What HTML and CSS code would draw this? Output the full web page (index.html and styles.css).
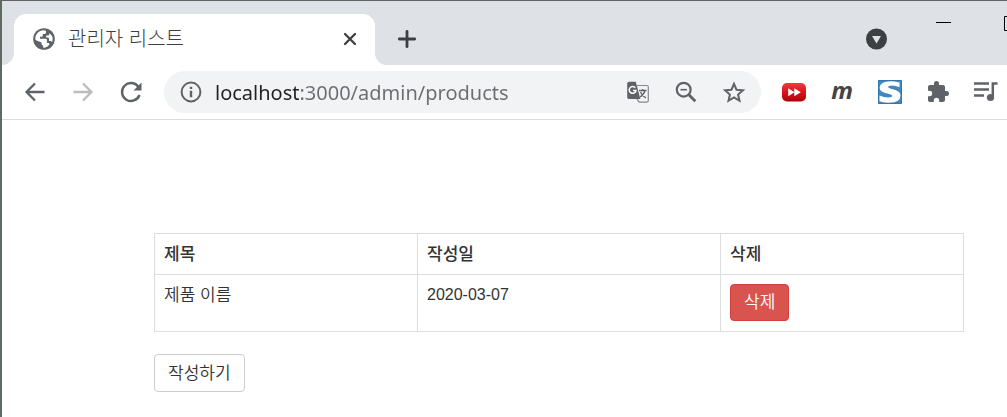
FILE: index.html
```html
<!DOCTYPE html>
<html lang="ko">
<head>
<meta charset="utf-8">
<title>관리자 리스트</title>
<link rel="stylesheet" href="styles.css">
</head>
<body>
<div class="window">
  <header class="tab-strip">
    <div class="strip-edge"></div>
    <div class="tab">
      <svg class="icon" viewBox="0 0 24 24" aria-hidden="true"><circle cx="12" cy="12" r="10.800" fill="#5f6368"/><path fill="#fff" d="M3.300 11.500C3.500 7 7 3.700 11.300 3.300L14 3.800V5.500q0 1.500-1.600 1.500h-1.600v1.500q0 1.300-1.400 1.300H8v2h5.600q1.300 0 1.300 1.300v3h1.200q1.200 0 1.500 1.200-1.500 2.300-4.200 3.200l-2.200.3v-2q-1.700-.3-1.700-2v-1.200L3.500 13ZM20.300 9.500l.4 2.500-.5 3-1.200-1h-2v-2.200q0-1.200-1.300-1.300h-1.500V8.600h1.700q1.300 0 1.300-1.300V6.200q2.200 1.200 3.100 3.300Z"/></svg>
      <span class="tab-title">관리자 리스트</span>
      <button class="icon-button" type="button" aria-label="탭 닫기"><svg class="icon" viewBox="0 0 24 24"><path d="M7 7l10 10M17 7L7 17" stroke="#3c4043" stroke-width="2.300" stroke-linecap="round"/></svg></button>
    </div>
    <div class="strip-rest">
      <button class="icon-button" type="button" aria-label="새 탭"><svg class="icon" viewBox="0 0 24 24"><path d="M12 4.300v15.400M4.300 12h15.400" stroke="#3c4043" stroke-width="2.800" stroke-linecap="round"/></svg></button>
      <button class="icon-button tab-search" type="button" aria-label="탭 검색"><svg class="icon" viewBox="0 0 24 24"><circle cx="12.500" cy="12" r="10.500" fill="#3c4043"/><path d="M8 9h9l-4.500 7.500z" fill="#dee1e6"/></svg></button>
      <div class="window-controls">
        <button class="icon-button" type="button" aria-label="최소화"><svg class="control" viewBox="0 0 16 16"><path d="M0 6.500h15" stroke="#000"/></svg></button>
        <button class="icon-button" type="button" aria-label="최대화"><svg class="control" viewBox="0 0 16 16"><path d="M.5.5h14v14H.5z" fill="none" stroke="#000"/></svg></button>
      </div>
    </div>
  </header>
  <nav class="toolbar" aria-label="탐색">
    <button class="icon-button" type="button" aria-label="뒤로"><svg class="icon" viewBox="0 0 24 24"><path d="M21.500 12H4M12 3.500L3.500 12l8.500 8.500" fill="none" stroke="#5f6368" stroke-width="2.300"/></svg></button>
    <button class="icon-button" type="button" aria-label="앞으로"><svg class="icon" viewBox="0 0 24 24"><path d="M2.500 12H20M12 3.500l8.500 8.500-8.500 8.500" fill="none" stroke="#babcbe" stroke-width="2.300"/></svg></button>
    <button class="icon-button" type="button" aria-label="새로고침"><svg class="icon" viewBox="0 0 24 24"><path d="M19.500 7A9 9 0 1 0 20.500 15" fill="none" stroke="#5f6368" stroke-width="2.400"/><path d="M22.500 2.500v8h-8z" fill="#5f6368"/></svg></button>
    <div class="address-bar">
      <button class="icon-button" type="button" aria-label="사이트 정보"><svg class="icon" viewBox="0 0 24 24"><circle cx="12" cy="12" r="9.400" fill="none" stroke="#5f6368" stroke-width="2"/><path d="M12 10.800v6.400M12 6.700v2.400" stroke="#5f6368" stroke-width="2.400"/></svg></button>
      <input class="address" type="text" value="localhost:3000/admin/products" aria-label="주소" spellcheck="false">
      <button class="icon-button" type="button" aria-label="번역"><svg class="icon" viewBox="0 0 24 24"><path d="M11 5.500h9.900q1.400 0 1.400 1.600v13.300q0 1.800-1.600 1.800H13.200l-2.200-3" fill="none" stroke="#85888b" stroke-width="1.200"/><path d="M3 1.700h6.800l4.500 17.300H3q-1.800 0-1.800-1.800V3.500Q1.200 1.700 3 1.700Z" fill="#5f6368"/><path d="M9.300 7.800A3.400 3.400 0 1 0 10 10.500H7" fill="none" stroke="#fff" stroke-width="1.500"/><path d="M13 10.500h7.500M16.800 9v1.500M19 10.500q-1 4-5 6.500M14.500 12q1.500 4 5.500 6" fill="none" stroke="#5f6368" stroke-width="1.300"/></svg></button>
      <button class="icon-button" type="button" aria-label="축소"><svg class="icon" viewBox="0 0 24 24"><circle cx="9.700" cy="9.700" r="6.900" fill="none" stroke="#5f6368" stroke-width="2.200"/><path d="M6.500 9.700h6.400" stroke="#5f6368" stroke-width="1.600"/><path d="M14.800 14.800l6.500 6.500" stroke="#5f6368" stroke-width="2.800"/></svg></button>
      <button class="icon-button" type="button" aria-label="북마크"><svg class="icon" viewBox="0 0 24 24"><path d="M12 3.800l2.500 5.900 6.400.6-4.800 4.200 1.400 6.300L12 17.500l-5.500 3.300 1.400-6.300-4.800-4.200 6.400-.6z" fill="none" stroke="#5f6368" stroke-width="2"/></svg></button>
    </div>
    <button class="icon-button" type="button" aria-label="빨리 감기"><svg class="icon" viewBox="0 0 24 24"><defs><linearGradient id="red" x2="0" y2="1"><stop stop-color="#f13b3b"/><stop offset=".5" stop-color="#d9141c"/><stop offset="1" stop-color="#ad0009"/></linearGradient></defs><rect y="3" width="24" height="18.500" rx="5" fill="url(#red)"/><path d="M6.200 8.300l6.300 4-6.300 4zM12.300 8.300l6.500 4-6.500 4z" fill="#fff"/></svg></button>
    <button class="icon-button extension-m" type="button">m</button>
    <button class="icon-button" type="button" aria-label="S 확장 프로그램"><svg class="icon" viewBox="0 0 24 24"><path d="M.5.500h23v23H.5z" fill="#4487be" stroke="#3475ac"/><path d="M21.500 2.500v4.700q-4-1.700-7.500-1.700-3.800 0-3.800 1.500 0 1.200 3.600 1.900 8.700 1.500 8.700 6.600 0 7.300-11.500 7.300-5 0-9.500-1.500V15.500q4.500 2 8.700 2 4 0 4-1.700 0-1.300-4-2.100Q1.600 12.500 1.600 7.800 2 1.200 12.500 1.200q4 0 9 1.300Z" fill="#fff"/></svg></button>
    <button class="icon-button" type="button" aria-label="확장 프로그램"><svg class="icon" viewBox="0 0 24 24"><path d="M20.500 11H19V7c0-1.100-.9-2-2-2h-4V3.500a2.500 2.500 0 0 0-5 0V5H4c-1.100 0-2 .9-2 2v3.800h1.500a2.700 2.700 0 0 1 0 5.400H2V20c0 1.100.9 2 2 2h3.800v-1.500a2.700 2.700 0 0 1 5.400 0V22H17c1.100 0 2-.9 2-2v-4h1.500a2.500 2.500 0 0 0 0-5Z" fill="#5f6368"/></svg></button>
    <button class="icon-button" type="button" aria-label="미디어"><svg class="icon" viewBox="0 0 24 24"><path d="M0 3.500h15M0 9.500h15M0 15.500h10M23.500 3.500h-4.700v13" fill="none" stroke="#5f6368" stroke-width="2.500"/><circle cx="16.500" cy="17.500" r="3.600" fill="#5f6368"/></svg></button>
  </nav>
  <main class="page">
    <table class="products">
      <thead>
        <tr><th class="col-title">제목</th><th class="col-date">작성일</th><th>삭제</th></tr>
      </thead>
      <tbody>
        <tr><td>제품 이름</td><td class="date">2020-03-07</td><td class="action"><button class="btn btn-danger" type="button">삭제</button></td></tr>
      </tbody>
    </table>
    <a class="btn btn-default" href="#">작성하기</a>
  </main>
</div>
</body>
</html>
```
FILE: styles.css
```css
* { box-sizing: border-box; }

body {
  margin: 0;
  background: #fff;
  color: #333;
  font: 350 17px/22px "Noto Sans CJK KR", sans-serif;
}

.window {
  min-height: 100vh;
  border-top: 1px solid #606367;
  border-left: 2px solid #5d6b60;
  overflow: hidden;
}

.icon { display: block; width: 24px; height: 24px; }
.control { display: block; width: 16px; height: 16px; }

.icon-button {
  flex: none;
  padding: 0;
  border: 0;
  background: none;
}

.tab-strip { display: flex; height: 64px; }

.strip-edge {
  width: 12px;
  background: #dee1e6;
  border-bottom-right-radius: 12px;
}

/* White tab with rounded top corners on the grey strip */
.tab {
  display: flex;
  align-items: center;
  width: 361px;
  padding: 12px 13px 0 18px;
  background: radial-gradient(circle at 12px 25px, #fff 12px, transparent 12px) 0 0 / 12px 25px no-repeat,
    radial-gradient(circle at 0 25px, #fff 12px, transparent 12px) 100% 0 / 12px 25px no-repeat,
    linear-gradient(#fff 0 0) 12px 13px / calc(100% - 24px) 100% no-repeat,
    linear-gradient(#fff 0 0) 0 25px / 100% 100% no-repeat,
    #dee1e6;
}

.tab-title {
  flex: 1;
  margin-left: 12px;
  padding-bottom: 2px;
  color: #3c4043;
  font-size: 20px;
  font-weight: 300;
}

.strip-rest {
  display: flex;
  flex: 1;
  align-items: center;
  min-width: 0;
  padding: 12px 0 0 20px;
  background: #dee1e6;
  border-bottom-left-radius: 12px;
}

.tab-search { margin-left: auto; }

.window-controls {
  display: flex;
  align-self: flex-start;
  gap: 52px;
  margin: 3px -13px 0 48px;
}

.toolbar {
  display: flex;
  align-items: center;
  gap: 24px;
  height: 55px;
  padding: 0 9px 1px 21px;
  border-bottom: 1px solid #dadce0;
}

.address-bar {
  display: flex;
  flex: 1;
  align-items: center;
  gap: 24px;
  height: 42px;
  min-width: 0;
  margin: 0 -3px;
  padding: 0 15px;
  border-radius: 21px;
  background: #f1f3f4;
}

.address {
  flex: 1;
  min-width: 0;
  margin-left: -12px;
  padding: 2px 0 0;
  border: 0;
  background: linear-gradient(90deg, #202124 85px, #6a6d71 85px);
  -webkit-background-clip: text;
  background-clip: text;
  color: transparent;
  font: 20px/28px "Noto Sans", sans-serif;
}

.extension-m {
  width: 24px;
  padding-bottom: 3px;
  color: #444;
  font: italic bold 24px/24px "Open Sans", sans-serif;
}

.page { padding: 113px 43px 24px 152px; }

.products {
  width: 100%;
  margin-bottom: 22px;
  border-collapse: collapse;
  table-layout: fixed;
}

.products th,
.products td {
  padding: 8px 9px 10px;
  border: 1px solid #ddd;
  text-align: left;
  vertical-align: top;
}

.products th { font-weight: 500; }
.products .action { padding-top: 9px; }

.col-title { width: 263px; }
.col-date { width: 303px; }
.products .date { padding-top: 9px; font: 16px/22px "Liberation Sans", sans-serif; }

.btn {
  display: inline-block;
  padding: 6px 13px 8px;
  border: 1px solid #ccc;
  border-radius: 4px;
  font: inherit;
  text-decoration: none;
}

.btn-default { background: #fff; color: #333; }

.btn-danger {
  display: block;
  padding: 5px 13px 8px;
  border-color: #d43f3a;
  background: #d9534f;
  color: #fff;
}
```
